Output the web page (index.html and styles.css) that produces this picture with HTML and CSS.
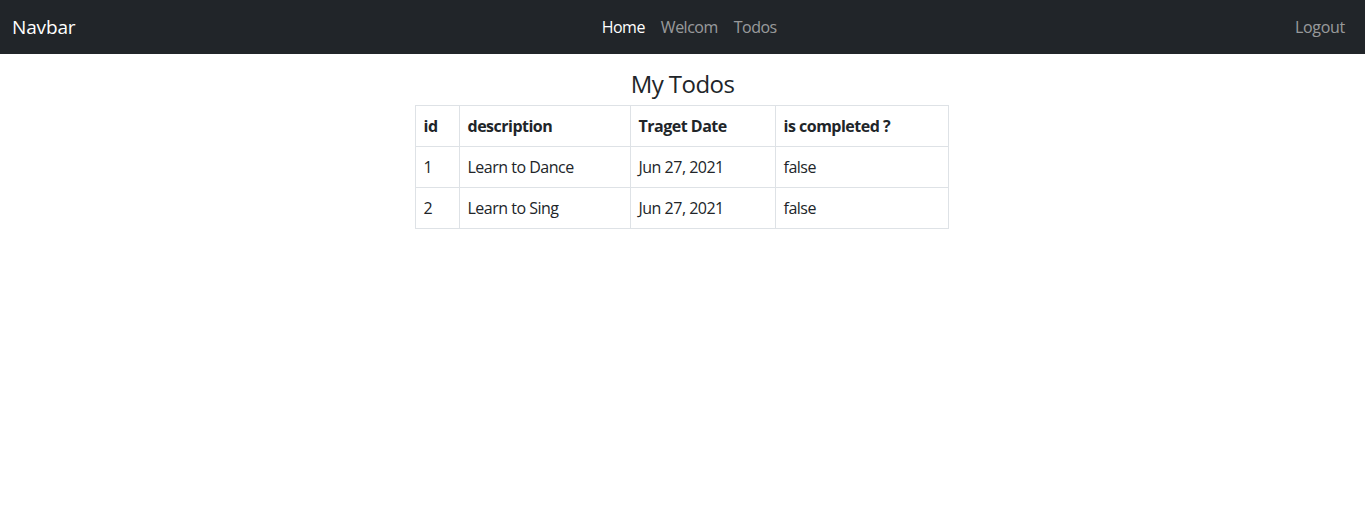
FILE: index.html
```html
<!DOCTYPE html>
<html lang="en">
<head>
<meta charset="utf-8">
<title>Todos</title>
<link rel="stylesheet" href="styles.css">
</head>
<body>
<nav class="navbar">
  <a class="brand" href="#">Navbar</a>
  <ul class="nav-center">
    <li><a class="nav-link active" href="#">Home</a></li>
    <li><a class="nav-link" href="#">Welcom</a></li>
    <li><a class="nav-link" href="#">Todos</a></li>
  </ul>
  <ul class="nav-right">
    <li><a class="nav-link" href="#">Logout</a></li>
  </ul>
</nav>
<main class="content">
  <h1 class="title">My Todos</h1>
  <table class="todos">
    <colgroup>
      <col class="c-id">
      <col class="c-desc">
      <col class="c-date">
      <col class="c-done">
    </colgroup>
    <thead>
      <tr><th>id</th><th>description</th><th>Traget Date</th><th>is completed ?</th></tr>
    </thead>
    <tbody>
      <tr><td>1</td><td>Learn to Dance</td><td>Jun 27, 2021</td><td>false</td></tr>
      <tr><td>2</td><td>Learn to Sing</td><td>Jun 27, 2021</td><td>false</td></tr>
    </tbody>
  </table>
</main>
</body>
</html>
```
FILE: styles.css
```css
* { box-sizing: border-box; }
html, body { margin: 0; padding: 0; }
body {
  font-family: "Open Sans", "Noto Sans", sans-serif;
  font-size: 16px;
  line-height: 24px;
  color: #212529;
  background: #fff;
}
.navbar {
  display: flex;
  align-items: center;
  height: 54px;
  padding: 0 12px;
  background: #212529;
}
.brand {
  font-size: 19px;
  line-height: 30px;
  color: #fff;
  text-decoration: none;
  margin-right: 16px;
  letter-spacing: -0.15px;
}
.nav-center, .nav-right {
  display: flex;
  list-style: none;
  margin: 0;
  padding: 0;
}
.nav-center { margin: 0 auto; }
.nav-link {
  display: block;
  padding: 8px;
  color: rgba(255, 255, 255, 0.55);
  text-decoration: none;
  font-size: 16px;
  letter-spacing: -0.5px;
}
.nav-right .nav-link { letter-spacing: -0.3px; }
.nav-link.active { color: #fff; }
.content {
  display: flex;
  flex-direction: column;
  align-items: center;
}
.title {
  margin: 15px 0 7px;
  font-size: 24px;
  line-height: 29px;
  font-weight: 400;
  letter-spacing: -0.55px;
}
.todos {
  border-collapse: collapse;
  table-layout: fixed;
  width: 533px;
  margin-right: 2px;
}
.c-id { width: 44px; }
.c-desc { width: 171px; }
.c-date { width: 145px; }
.c-done { width: 173px; }
.todos th, .todos td {
  border: 1px solid #dee2e6;
  padding: 8px;
  text-align: left;
  font-size: 16px;
  line-height: 24px;
  letter-spacing: -0.5px;
  white-space: nowrap;
}
.todos th { font-weight: 700; }
.todos td { font-weight: 400; }
```
